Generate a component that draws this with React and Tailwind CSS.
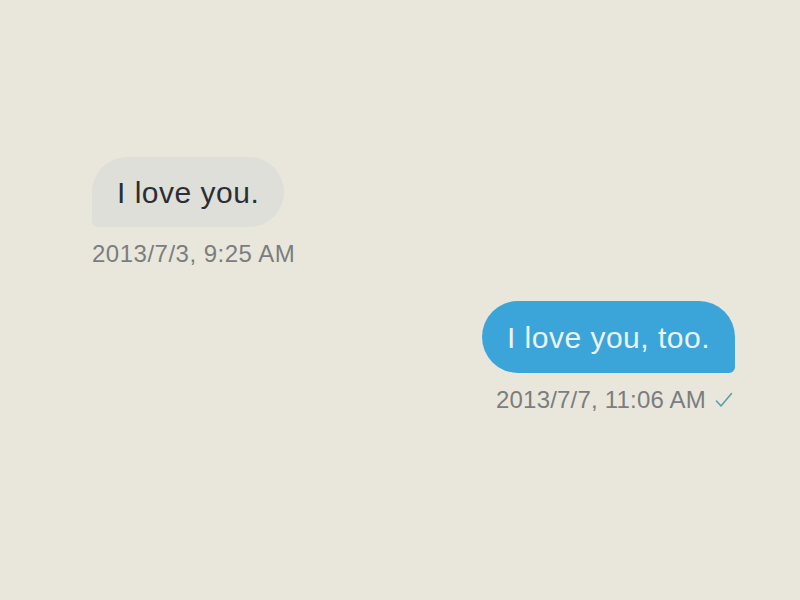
export default function App() {
  return (
    <div
      className="flex h-[600px] w-[800px] flex-col bg-[#e9e7dc] pl-[92px] pr-[65px] pt-[157px] tracking-[0.5px] text-[#2b2e33]"
      style={{ fontFamily: '"Liberation Sans", Arial, sans-serif' }}
    >
      {/* Received */}
      <div className="flex flex-col items-start">
        <div className="flex h-[70px] items-center rounded-[35px] rounded-bl-[6px] bg-[#dfdfd9] px-[25px] text-[30px]">
          I love you.
        </div>
        <div className="mt-[13px] text-[24px] leading-[28px] text-[#7b7d80]">2013/7/3, 9:25 AM</div>
      </div>

      {/* Sent */}
      <div className="mt-[33px] flex flex-col items-end">
        <div className="flex h-[72px] items-center rounded-[36px] rounded-br-[6px] bg-[#3ba5d9] px-[25px] text-[30px] text-[#eaf4f4]">
          I love you, too.
        </div>
        <div className="mr-[2px] mt-[13px] flex items-center gap-[9px] text-[24px] leading-[28px] tracking-[0.2px] text-[#7b7d80]">
          <span>2013/7/7, 11:06 AM</span>
          <svg width="18" height="16" viewBox="0 0 18 16" fill="none">
            <path d="M1.5 9 L6 14 L16.5 1.5" stroke="#5c9fa8" strokeWidth="1.6" strokeLinecap="round" strokeLinejoin="round" />
          </svg>
        </div>
      </div>
    </div>
  )
}
